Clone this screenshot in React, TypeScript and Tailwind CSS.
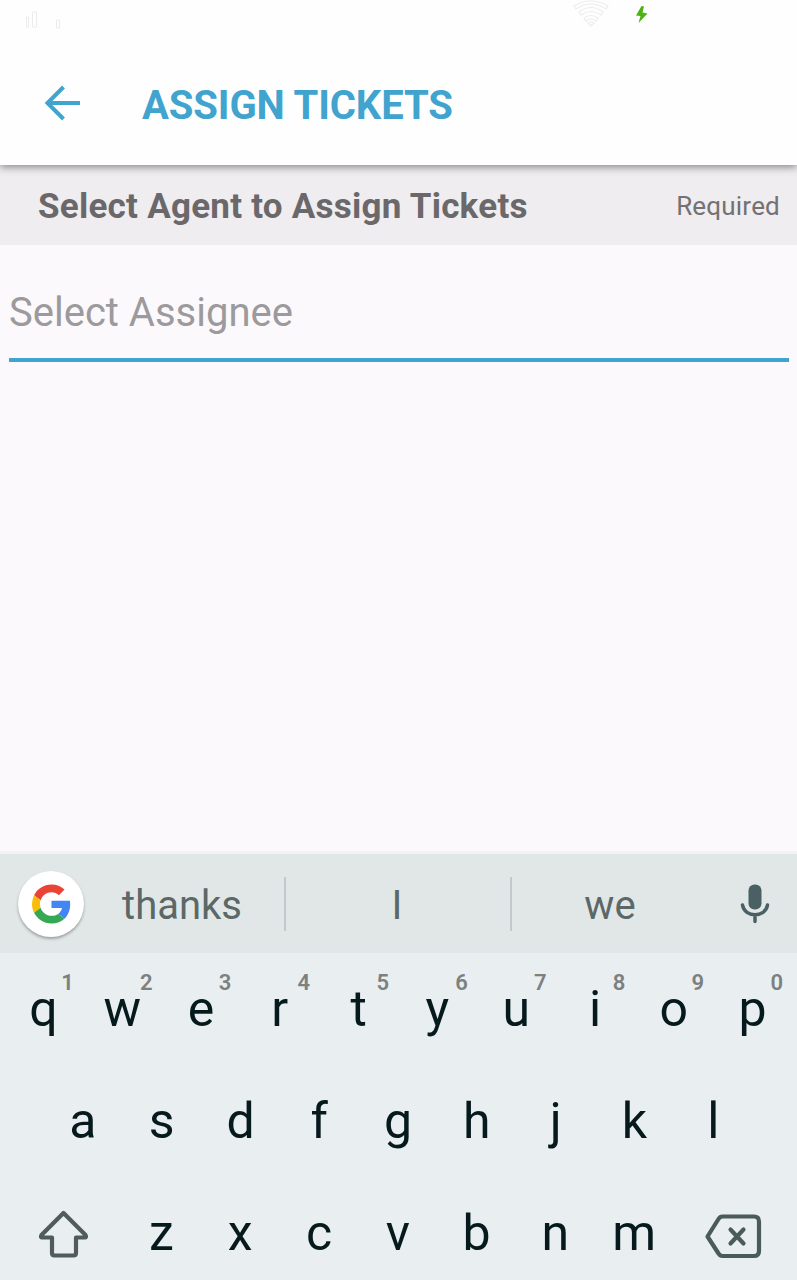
import type { ReactNode } from "react";

const topRow = ["q", "w", "e", "r", "t", "y", "u", "i", "o", "p"];
const digits = ["1", "2", "3", "4", "5", "6", "7", "8", "9", "0"];
const homeRow = ["a", "s", "d", "f", "g", "h", "j", "k", "l"];
const bottomRow = ["z", "x", "c", "v", "b", "n", "m"];

function Key({ children, hint }: { children: ReactNode; hint?: string }) {
  return (
    <div className="relative flex h-full w-[78.8px] shrink-0 items-center justify-center text-[50px] leading-none text-[#061a1e]">
      {children}
      {hint && (
        <span className="absolute top-[19px] right-[9px] text-[22px] leading-[22px] font-semibold text-[#7c8081]">
          {hint}
        </span>
      )}
    </div>
  );
}

function StatusBar() {
  return (
    <div className="flex h-[46px] shrink-0 items-start">
      <svg className="ml-6 h-8 w-10" viewBox="0 0 40 32" fill="none" stroke="#ececec">
        <path d="M2.500 17v10h2V17zM8.500 12v15h4V12zM32.500 20v8h3v-8z" />
      </svg>
      <svg className="ml-[508px] h-7 w-10" viewBox="0 0 40 28" fill="none" stroke="#ededed" strokeWidth="1.2">
        <path d="M2 6Q18.500-4 36 6l-2 3Q18.500-1 4 9zM7 12q12-9 24 0l-2 3q-10-7-20 0zM12 18q7-5 14 0l-2 3q-5-4-10 0zM16 23q3-2 6 0l-3 3z" />
      </svg>
      <svg className="mt-[6px] ml-6 h-[17px] w-3" viewBox="0 0 12 17" fill="#49b412">
        <path d="M5.500 0 0 9.500l4.500 0.500L2.500 17 11.500 7.500 6.500 6.500 8 .5z" />
      </svg>
    </div>
  );
}

function GoogleLogo() {
  return (
    <svg className="h-10 w-[39px]" viewBox="0 0 48 48">
      <path fill="#ea4335" d="M24 9.500c3.540 0 6.710 1.220 9.210 3.600l6.850-6.850C35.900 2.380 30.470 0 24 0 14.620 0 6.510 5.380 2.560 13.220l7.980 6.190C12.430 13.720 17.740 9.500 24 9.500z" />
      <path fill="#4285f4" d="M46.980 24.550c0-1.570-.15-3.090-.38-4.550H24v9.020h12.940c-.58 2.960-2.260 5.480-4.780 7.180l7.730 6c4.510-4.180 7.090-10.360 7.090-17.650z" />
      <path fill="#fbbc05" d="M10.530 28.590A14.500 14.500 0 0 1 9.770 24c0-1.600.27-3.140.76-4.590l-7.980-6.190A23.900 23.900 0 0 0 0 24c0 3.880.92 7.540 2.560 10.780z" />
      <path fill="#34a853" d="M24 48c6.480 0 11.930-2.130 15.890-5.810l-7.730-6c-2.150 1.450-4.920 2.300-8.160 2.300-6.260 0-11.570-4.220-13.470-9.910l-7.980 6.190C6.510 42.620 14.620 48 24 48z" />
    </svg>
  );
}

export default function App() {
  return (
    <div className="flex h-[1280px] w-[797px] flex-col overflow-hidden bg-[#fbf9fc] font-[Roboto,sans-serif]">
      <header className="relative z-10 flex h-[165px] shrink-0 flex-col bg-[#fefefe] shadow-[0_2px_8px_rgba(0,0,0,0.45)]">
        <StatusBar />
        <div className="flex h-[119px] items-center pt-px">
          <svg className="mb-[6px] ml-[44px] h-9 w-9" viewBox="0 0 36 36" fill="none" stroke="#40a4ce" strokeWidth="4">
            <path d="M36 18H4M19.500 2 3.500 18l16 16" />
          </svg>
          <h1 className="ml-[62px] text-[40px] leading-none font-bold tracking-[-0.1px] text-[#40a4ce]">ASSIGN TICKETS</h1>
        </div>
      </header>

      <div className="flex h-20 shrink-0 items-center justify-between bg-[#efedef] pt-[2px] pr-[17px] pl-[38px]">
        <h2 className="text-[35px] leading-none font-bold tracking-[0.25px] text-[#6a686a]">Select Agent to Assign Tickets</h2>
        <span className="text-[26px] leading-none tracking-[0.2px] text-[#737173]">Required</span>
      </div>

      <main className="flex-1 pt-[25px] pr-2 pl-[9px]">
        <div className="flex h-[92px] items-start border-b-4 border-[#40a4ce] pt-[23px] text-[40px] leading-none text-[#9c9a9d]">
          Select Assignee
        </div>
      </main>

      <section className="flex h-[429px] shrink-0 flex-col bg-[#e9eef0]">
        <div className="flex h-[102px] shrink-0 items-center border-t-3 border-[#f0f3f4] bg-[#e1e7e7] text-[40px] leading-none text-[#5c6868]">
          <div className="ml-[18px] flex h-[66px] w-[66px] shrink-0 items-center justify-center rounded-full bg-white shadow-[0_2px_3px_rgba(0,0,0,0.3)]">
            <GoogleLogo />
          </div>
          <div className="flex h-[54px] w-[202px] items-center justify-center border-r-2 border-[#c3c9ca] pt-[5px] pr-1">
            thanks
          </div>
          <div className="flex h-[54px] w-[226px] items-center justify-center border-r-2 border-[#c3c9ca] pt-[5px] pr-[2px]">I</div>
          <div className="flex h-[54px] w-[198px] items-center justify-center pt-[5px] pr-[2px]">we</div>
          <svg className="ml-[30px] h-10 w-[30px]" viewBox="0 0 30 40" fill="none" stroke="#4b6064" strokeWidth="3.500" strokeLinecap="round">
            <rect x="8.500" y="0.500" width="13" height="25" rx="6" fill="#4b6064" stroke="none" />
            <path d="M2.500 21c2 13 23 13 25 0M15 31v6.500" />
          </svg>
        </div>

        <div className="flex h-[112px] shrink-0 pl-[4px]">
          {topRow.map((letter, index) => (
            <Key key={letter} hint={digits[index]}>{letter}</Key>
          ))}
        </div>
        <div className="flex h-[111px] shrink-0 pl-[43.500px]">
          {homeRow.map((letter) => (
            <Key key={letter}>{letter}</Key>
          ))}
        </div>
        <div className="flex h-[113px] shrink-0 items-center">
          <svg className="mt-[3px] ml-[38px] h-[48px] w-[51px]" viewBox="0 0 51 48" fill="none" stroke="#505b5d" strokeWidth="4.200" strokeLinejoin="round">
            <path d="M25.500 3 3.500 25Q2 27.500 4.500 27.500H14V43Q14 45.500 16.500 45.500H35.500Q38 45.500 38 43V27.500H46.500Q49 27.500 47.500 25z" />
          </svg>
          <div className="ml-[33px] flex h-full">
            {bottomRow.map((letter) => (
              <Key key={letter}>{letter}</Key>
            ))}
          </div>
          <svg className="mt-[7px] ml-[31.400px] h-[45px] w-[57px]" viewBox="0 0 57 45" fill="none" stroke="#4a5b5c" strokeWidth="4.200" strokeLinecap="round" strokeLinejoin="round">
            <path d="M17.500 2.500H49Q54 2.500 54 7.500V37Q54 42 49 42H17.500Q15 42 13.500 39.500L2.500 22.500 13.500 5Q15 2.500 17.500 2.500z" />
            <path d="M25.500 15.500 38.500 29.500M38.500 15.500 25.500 29.500" />
          </svg>
        </div>
      </section>
    </div>
  );
}
